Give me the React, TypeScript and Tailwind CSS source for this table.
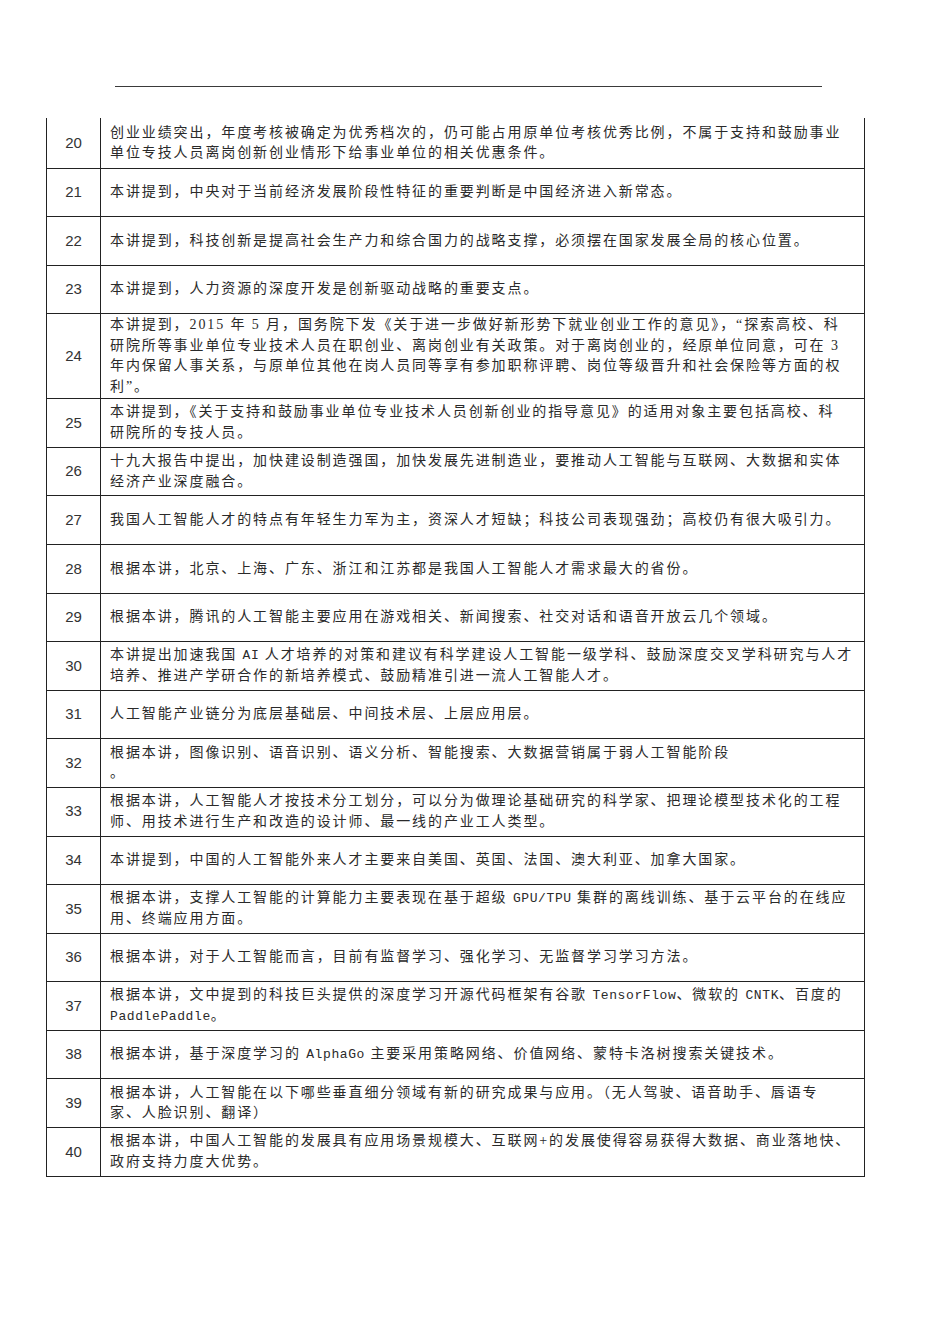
import type { ReactNode } from 'react';

const M = ({ children }: { children: ReactNode }) => (
  <span className="font-['Liberation_Mono','Noto_Sans_CJK_SC',monospace] text-[13px] tracking-[0.6px]">{children}</span>
);

type Row = { n: number; h: string; lines: ReactNode[] };

const rows: Row[] = [
  {
    n: 20,
    h: 'h-[51px]',
    lines: [
      '创业业绩突出，年度考核被确定为优秀档次的，仍可能占用原单位考核优秀比例，不属于支持和鼓励事业',
      '单位专技人员离岗创新创业情形下给事业单位的相关优惠条件。',
    ],
  },
  { n: 21, h: 'h-[48.4px]', lines: ['本讲提到，中央对于当前经济发展阶段性特征的重要判断是中国经济进入新常态。'] },
  { n: 22, h: 'h-[48.4px]', lines: ['本讲提到，科技创新是提高社会生产力和综合国力的战略支撑，必须摆在国家发展全局的核心位置。'] },
  { n: 23, h: 'h-[48.4px]', lines: ['本讲提到，人力资源的深度开发是创新驱动战略的重要支点。'] },
  {
    n: 24,
    h: 'h-[85px]',
    lines: [
      '本讲提到，2015 年 5 月，国务院下发《关于进一步做好新形势下就业创业工作的意见》，“探索高校、科',
      '研院所等事业单位专业技术人员在职创业、离岗创业有关政策。对于离岗创业的，经原单位同意，可在 3',
      '年内保留人事关系，与原单位其他在岗人员同等享有参加职称评聘、岗位等级晋升和社会保险等方面的权',
      '利”。',
    ],
  },
  {
    n: 25,
    h: 'h-[48.6px]',
    lines: [
      '本讲提到，《关于支持和鼓励事业单位专业技术人员创新创业的指导意见》的适用对象主要包括高校、科',
      '研院所的专技人员。',
    ],
  },
  {
    n: 26,
    h: 'h-[48.6px]',
    lines: [
      '十九大报告中提出，加快建设制造强国，加快发展先进制造业，要推动人工智能与互联网、大数据和实体',
      '经济产业深度融合。',
    ],
  },
  { n: 27, h: 'h-[48.6px]', lines: ['我国人工智能人才的特点有年轻生力军为主，资深人才短缺；科技公司表现强劲；高校仍有很大吸引力。'] },
  { n: 28, h: 'h-[48.6px]', lines: ['根据本讲，北京、上海、广东、浙江和江苏都是我国人工智能人才需求最大的省份。'] },
  { n: 29, h: 'h-[48.6px]', lines: ['根据本讲，腾讯的人工智能主要应用在游戏相关、新闻搜索、社交对话和语音开放云几个领域。'] },
  {
    n: 30,
    h: 'h-[48.6px]',
    lines: [
      <>
        本讲提出加速我国 <M>AI</M> 人才培养的对策和建议有科学建设人工智能一级学科、鼓励深度交叉学科研究与人才
      </>,
      '培养、推进产学研合作的新培养模式、鼓励精准引进一流人工智能人才。',
    ],
  },
  { n: 31, h: 'h-[48.6px]', lines: ['人工智能产业链分为底层基础层、中间技术层、上层应用层。'] },
  {
    n: 32,
    h: 'h-[48.6px]',
    lines: ['根据本讲，图像识别、语音识别、语义分析、智能搜索、大数据营销属于弱人工智能阶段', '。'],
  },
  {
    n: 33,
    h: 'h-[48.6px]',
    lines: [
      '根据本讲，人工智能人才按技术分工划分，可以分为做理论基础研究的科学家、把理论模型技术化的工程',
      '师、用技术进行生产和改造的设计师、最一线的产业工人类型。',
    ],
  },
  { n: 34, h: 'h-[48.6px]', lines: ['本讲提到，中国的人工智能外来人才主要来自美国、英国、法国、澳大利亚、加拿大国家。'] },
  {
    n: 35,
    h: 'h-[48.6px]',
    lines: [
      <>
        根据本讲，支撑人工智能的计算能力主要表现在基于超级 <M>GPU/TPU</M> 集群的离线训练、基于云平台的在线应
      </>,
      '用、终端应用方面。',
    ],
  },
  { n: 36, h: 'h-[48.6px]', lines: ['根据本讲，对于人工智能而言，目前有监督学习、强化学习、无监督学习学习方法。'] },
  {
    n: 37,
    h: 'h-[48.6px]',
    lines: [
      <>
        根据本讲，文中提到的科技巨头提供的深度学习开源代码框架有谷歌 <M>TensorFlow</M>、微软的 <M>CNTK</M>、百度的
      </>,
      <>
        <M>PaddlePaddle</M>。
      </>,
    ],
  },
  {
    n: 38,
    h: 'h-[48.6px]',
    lines: [
      <>
        根据本讲，基于深度学习的 <M>AlphaGo</M> 主要采用策略网络、价值网络、蒙特卡洛树搜索关键技术。
      </>,
    ],
  },
  {
    n: 39,
    h: 'h-[48.6px]',
    lines: [
      '根据本讲，人工智能在以下哪些垂直细分领域有新的研究成果与应用。（无人驾驶、语音助手、唇语专',
      '家、人脸识别、翻译）',
    ],
  },
  {
    n: 40,
    h: 'h-[48.6px]',
    lines: [
      '根据本讲，中国人工智能的发展具有应用场景规模大、互联网+的发展使得容易获得大数据、商业落地快、',
      '政府支持力度大优势。',
    ],
  },
];

export default function App() {
  return (
    <div className="min-h-[1344px] w-[950px] bg-white pt-[86px] text-[#2a2a2a]">
      {/* header rule */}
      <div className="ml-[115px] h-px w-[707px] bg-[#3a3a3a]" />

      <div className="ml-[46px] mt-[31px] w-[819px] border-x border-[#222]">
        {rows.map((r) => (
          <div key={r.n} className={`flex border-b border-[#222] ${r.h}`}>
            <div className="flex w-[54px] shrink-0 items-center justify-center border-r border-[#222] font-['Liberation_Sans',sans-serif] text-[15px] text-[#333]">
              {r.n}
            </div>
            <div className="flex min-w-0 flex-1 flex-col justify-center overflow-hidden pl-[9px] font-['Liberation_Serif','Noto_Sans_CJK_SC',serif] text-[14px] leading-[20.5px] tracking-[1.9px]">
              {r.lines.map((l, i) => (
                <div key={i} className="whitespace-nowrap">
                  {l}
                </div>
              ))}
            </div>
          </div>
        ))}
      </div>
    </div>
  );
}
